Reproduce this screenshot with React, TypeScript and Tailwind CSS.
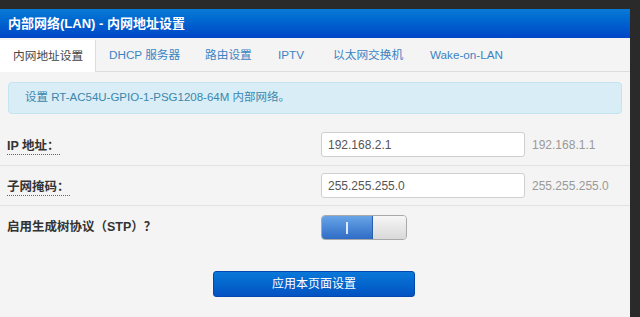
import React from "react";

const font = { fontFamily: '"Liberation Sans", "Noto Sans CJK SC", sans-serif' };

export default function App() {
  const tabs: { t: string; w: string }[] = [
    { t: "DHCP 服务器", w: "w-[96px]" },
    { t: "路由设置", w: "w-[73px]" },
    { t: "IPTV", w: "w-[55px]" },
    { t: "以太网交换机", w: "w-[97px]" },
    { t: "Wake-on-LAN", w: "w-[100px]" },
  ];
  return (
    <div className="w-[640px] h-[317px] bg-[#2a2a2a] pt-[9px] overflow-hidden" style={font}>
      <div className="w-[630px] h-[308px] bg-[#f4f4f4] flex flex-col">
        <div className="h-[29px] bg-gradient-to-b from-[#0a7ad6] to-[#0345c6] flex items-center px-[8px] text-white font-bold text-[13px]">
          内部网络(LAN) - 内网地址设置
        </div>
        <div className="h-[34px] flex items-end border-b border-[#dcdcdc] bg-[#f4f4f4]">
          <div className="w-[96px] h-[32px] px-[13px] flex items-center bg-white border-r border-[#dcdcdc] text-[11.7px] text-[#444] -mb-px whitespace-nowrap">
            内网地址设置
          </div>
          {tabs.map(({ t, w }) => (
            <div key={t} className={`${w} h-[32px] px-[13px] flex items-center text-[11.7px] text-[#3b83c3] whitespace-nowrap`}>
              {t}
            </div>
          ))}
        </div>
        <div className="mx-[8px] mt-[10px] h-[32px] rounded-[4px] bg-[#d9edf7] border border-[#c4e5f0] flex items-center px-[16px] text-[11.5px] text-[#3a87ad]">
          设置 RT-AC54U-GPIO-1-PSG1208-64M 内部网络。
        </div>
        <div className="mt-[10px] flex flex-col">
          <div className="h-[41px] flex items-center px-[7px]">
            <div className="w-[314px]">
              <span className="font-bold text-[12.5px] text-[#333] border-b border-dotted border-[#666] pb-[1px]">IP 地址：</span>
            </div>
            <div className="w-[204px] h-[25px] bg-white border border-[#cfcfcf] rounded-[3px] flex items-center px-[6px] text-[12px] text-[#555]">192.168.2.1</div>
            <div className="ml-[7px] text-[12px] text-[#999]">192.168.1.1</div>
          </div>
          <div className="h-[40px] flex items-center px-[7px] border-t border-[#e2e2e2]">
            <div className="w-[314px]">
              <span className="font-bold text-[12.5px] text-[#333] border-b border-dotted border-[#666] pb-[1px]">子网掩码：</span>
            </div>
            <div className="w-[204px] h-[25px] bg-white border border-[#cfcfcf] rounded-[3px] flex items-center px-[6px] text-[12px] text-[#555]">255.255.255.0</div>
            <div className="ml-[7px] text-[12px] text-[#999]">255.255.255.0</div>
          </div>
          <div className="h-[44px] flex items-center px-[7px] border-t border-[#e2e2e2]">
            <div className="w-[314px] font-bold text-[12.5px] text-[#333]">启用生成树协议（STP）？</div>
            <div className="w-[86px] h-[25px] rounded-[4px] border border-[#a9a9a9] flex overflow-hidden">
              <div className="w-[51px] h-full bg-gradient-to-b from-[#68a4e6] to-[#2f6cc6] flex items-center justify-center border-r border-[#2b5fae]">
                <div className="w-[2px] h-[12px] bg-[#dfeaf8]" />
              </div>
              <div className="flex-1 h-full bg-gradient-to-b from-[#f6f6f6] to-[#d9d9d9]" />
            </div>
          </div>
        </div>
        <div className="mt-[22px] flex justify-center pr-[2px]">
          <div className="w-[202px] h-[26px] rounded-[3px] bg-gradient-to-b from-[#0a78d8] to-[#0452c2] border border-[#0348b0] flex items-center justify-center text-white text-[12px]">
            应用本页面设置
          </div>
        </div>
      </div>
    </div>
  );
}
